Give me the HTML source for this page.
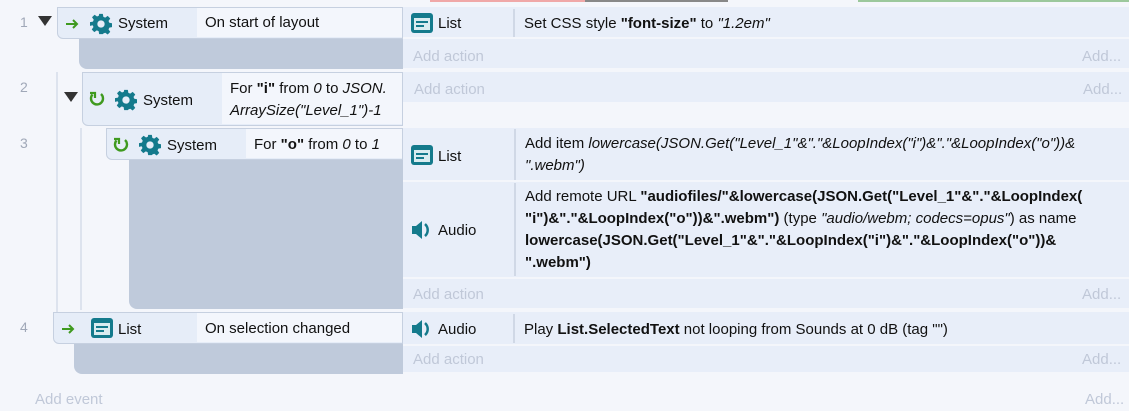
<!DOCTYPE html>
<html><head><meta charset="utf-8"><style>
body{margin:0;width:1129px;height:403px;overflow:hidden;background:#f4f6fb;font-family:"Segoe UI","Liberation Sans",sans-serif;font-size:15px;color:#111;position:relative}
.a{position:absolute;box-sizing:border-box}
.num{color:#a0a8b8;font-size:14px}
.hdr{background:#e6edf8;border:1px solid #c6d0e0;border-radius:0 0 0 6px}
.ctext{background:#f3f6fc;white-space:nowrap}
.gray{background:#bfcadb;border-radius:0 0 0 8px}
.act{background:#e8eef9;border-bottom:2px solid #f4f6fb}
.addl{color:#c0c8d8}
.obj{border-right:2px solid #d0d8e6}
.t{white-space:nowrap;line-height:22px}
.guide{background:#dde3ee;width:2px}
i{font-style:italic}
svg{position:absolute}
</style></head><body>
<div class="a" style="left:430px;top:0;width:155px;height:2px;background:#f0a8a8"></div>
<div class="a" style="left:585px;top:0;width:143px;height:2px;background:#888"></div>
<div class="a" style="left:858px;top:0;width:271px;height:2px;background:#9cc89c"></div>

<div class="a guide" style="left:56px;top:72px;height:240px"></div>
<div class="a guide" style="left:80px;top:128px;height:182px"></div>

<div class="a num" style="left:20px;top:14px">1</div>
<div class="a num" style="left:20px;top:79px">2</div>
<div class="a num" style="left:20px;top:135px">3</div>
<div class="a num" style="left:20px;top:319px">4</div>

<svg style="left:38px;top:16px" width="14" height="10"><path d="M0 0H14L7 10Z" fill="#333"/></svg>
<svg style="left:64px;top:92px" width="14" height="10"><path d="M0 0H14L7 10Z" fill="#333"/></svg>

<!-- Event 1 -->
<div class="a gray" style="left:79px;top:38px;width:324px;height:31px"></div>
<div class="a hdr" style="left:57px;top:7px;width:346px;height:32px"></div>
<div class="a ctext" style="left:197px;top:8px;width:205px;height:29px;padding:4px 0 0 8px;line-height:22px">On start of layout</div>
<svg style="left:66px;top:18px" width="14" height="12"><path d="M0 6H11M7 2L11 6L7 10" stroke="#3f9a1f" stroke-width="2" fill="none"/></svg>
<svg style="left:90px;top:13px" width="22" height="22" viewBox="0 0 24 24"><path fill="#147a8c" d="M10 1h4l.6 3.2 2 .9 2.7-1.9 2.8 2.8-1.9 2.7.9 2 3.2.6v4l-3.2.6-.9 2 1.9 2.7-2.8 2.8-2.7-1.9-2 .9L14 23h-4l-.6-3.2-2-.9-2.7 1.9-2.8-2.8 1.9-2.7-.9-2L0 14v-4l3.2-.6.9-2L2.2 4.7 5 1.9l2.7 1.9 2-.9zM12 8a4 4 0 100 8 4 4 0 000-8z"/></svg>
<div class="a t" style="left:118px;top:13px">System</div>

<!-- Event 2 -->
<div class="a hdr" style="left:82px;top:72px;width:321px;height:54px"></div>
<div class="a ctext" style="left:222px;top:73px;width:180px;height:51px;padding:5px 0 0 8px;line-height:22px">For <b>"i"</b> from <i>0</i> to <i>JSON.</i><br><i>ArraySize("Level_1")-1</i></div>
<svg style="left:88px;top:90px" width="18" height="18" viewBox="0 0 18 18"><path d="M4.5 4.5A6 6 0 1 0 13 4" stroke="#3f9a1f" stroke-width="2.4" fill="none"/><path d="M2 3h5v5" stroke="#3f9a1f" stroke-width="2.2" fill="none"/></svg>
<svg style="left:115px;top:89px" width="22" height="22" viewBox="0 0 24 24"><path fill="#147a8c" d="M10 1h4l.6 3.2 2 .9 2.7-1.9 2.8 2.8-1.9 2.7.9 2 3.2.6v4l-3.2.6-.9 2 1.9 2.7-2.8 2.8-2.7-1.9-2 .9L14 23h-4l-.6-3.2-2-.9-2.7 1.9-2.8-2.8 1.9-2.7-.9-2L0 14v-4l3.2-.6.9-2L2.2 4.7 5 1.9l2.7 1.9 2-.9zM12 8a4 4 0 100 8 4 4 0 000-8z"/></svg>
<div class="a t" style="left:143px;top:90px">System</div>

<!-- Event 3 -->
<div class="a gray" style="left:129px;top:159px;width:274px;height:150px"></div>
<div class="a hdr" style="left:106px;top:128px;width:297px;height:32px"></div>
<div class="a ctext" style="left:246px;top:129px;width:156px;height:29px;padding:5px 0 0 8px;line-height:22px">For <b>"o"</b> from <i>0</i> to <i>1</i></div>
<svg style="left:112px;top:136px" width="18" height="18" viewBox="0 0 18 18"><path d="M4.5 4.5A6 6 0 1 0 13 4" stroke="#3f9a1f" stroke-width="2.4" fill="none"/><path d="M2 3h5v5" stroke="#3f9a1f" stroke-width="2.2" fill="none"/></svg>
<svg style="left:139px;top:134px" width="22" height="22" viewBox="0 0 24 24"><path fill="#147a8c" d="M10 1h4l.6 3.2 2 .9 2.7-1.9 2.8 2.8-1.9 2.7.9 2 3.2.6v4l-3.2.6-.9 2 1.9 2.7-2.8 2.8-2.7-1.9-2 .9L14 23h-4l-.6-3.2-2-.9-2.7 1.9-2.8-2.8 1.9-2.7-.9-2L0 14v-4l3.2-.6.9-2L2.2 4.7 5 1.9l2.7 1.9 2-.9zM12 8a4 4 0 100 8 4 4 0 000-8z"/></svg>
<div class="a t" style="left:167px;top:135px">System</div>

<!-- Event 4 -->
<div class="a gray" style="left:74px;top:342px;width:329px;height:32px"></div>
<div class="a hdr" style="left:53px;top:312px;width:350px;height:32px"></div>
<div class="a ctext" style="left:197px;top:313px;width:205px;height:29px;padding:5px 0 0 8px;line-height:22px">On selection changed</div>
<svg style="left:62px;top:323px" width="14" height="12"><path d="M0 6H11M7 2L11 6L7 10" stroke="#3f9a1f" stroke-width="2" fill="none"/></svg>

<!-- Actions -->
<div class="a act" style="left:403px;top:7px;width:726px;height:32px"></div>
<div class="a obj" style="left:403px;top:9px;width:112px;height:28px"></div>
<div class="a t" style="left:438px;top:13px">List</div>
<div class="a t" style="left:524px;top:13px">Set CSS style <b>"font-size"</b> to <i>"1.2em"</i></div>
<div class="a act" style="left:403px;top:39px;width:726px;height:31px"></div>
<div class="a t addl" style="left:413px;top:46px">Add action</div>
<div class="a t addl" style="left:1082px;top:46px">Add...</div>

<div class="a act" style="left:403px;top:72px;width:726px;height:32px"></div>
<div class="a t addl" style="left:414px;top:79px">Add action</div>
<div class="a t addl" style="left:1083px;top:79px">Add...</div>

<div class="a act" style="left:403px;top:128px;width:726px;height:54px"></div>
<div class="a obj" style="left:403px;top:129px;width:113px;height:51px"></div>
<div class="a t" style="left:438px;top:146px">List</div>
<div class="a t" style="left:525px;top:133px">Add item <i>lowercase(JSON.Get("Level_1"&amp;"."&amp;LoopIndex("i")&amp;"."&amp;LoopIndex("o"))&amp;</i><br><i>".webm")</i></div>

<div class="a act" style="left:403px;top:182px;width:726px;height:97px"></div>
<div class="a obj" style="left:403px;top:183px;width:113px;height:93px"></div>
<div class="a t" style="left:438px;top:220px">Audio</div>
<div class="a t" style="left:525px;top:186px;width:604px;overflow:hidden">Add remote URL <b>"audiofiles/"&amp;lowercase(JSON.Get("Level_1"&amp;"."&amp;LoopIndex(</b><br><b>"i")&amp;"."&amp;LoopIndex("o"))&amp;".webm")</b> (type <i>"audio/webm; codecs=opus"</i>) as name<br><b>lowercase(JSON.Get("Level_1"&amp;"."&amp;LoopIndex("i")&amp;"."&amp;LoopIndex("o"))&amp;</b><br><b>".webm")</b></div>
<div class="a act" style="left:403px;top:279px;width:726px;height:31px"></div>
<div class="a t addl" style="left:413px;top:284px">Add action</div>
<div class="a t addl" style="left:1082px;top:284px">Add...</div>

<div class="a act" style="left:403px;top:312px;width:726px;height:34px"></div>
<div class="a obj" style="left:403px;top:314px;width:112px;height:29px"></div>
<div class="a t" style="left:438px;top:319px">Audio</div>
<div class="a t" style="left:524px;top:319px">Play <b>List.SelectedText</b> not looping from Sounds at 0 dB (tag "")</div>
<div class="a act" style="left:403px;top:346px;width:726px;height:28px"></div>
<div class="a t addl" style="left:413px;top:349px">Add action</div>
<div class="a t addl" style="left:1082px;top:349px">Add...</div>

<div class="a t addl" style="left:35px;top:389px">Add event</div>
<div class="a t addl" style="left:1085px;top:389px">Add...</div>

<svg style="left:411px;top:13px" width="22" height="20" viewBox="0 0 22 20"><rect x="0" y="0" width="22" height="20" rx="3" fill="#147a8c"/><rect x="3" y="5" width="16" height="12" fill="#d9ecf0"/><rect x="5" y="8" width="12" height="2" fill="#147a8c"/><rect x="5" y="12" width="8" height="2" fill="#147a8c"/></svg>
<svg style="left:411px;top:145px" width="22" height="20" viewBox="0 0 22 20"><rect x="0" y="0" width="22" height="20" rx="3" fill="#147a8c"/><rect x="3" y="5" width="16" height="12" fill="#d9ecf0"/><rect x="5" y="8" width="12" height="2" fill="#147a8c"/><rect x="5" y="12" width="8" height="2" fill="#147a8c"/></svg>
<svg style="left:91px;top:318px" width="22" height="20" viewBox="0 0 22 20"><rect x="0" y="0" width="22" height="20" rx="3" fill="#147a8c"/><rect x="3" y="5" width="16" height="12" fill="#d9ecf0"/><rect x="5" y="8" width="12" height="2" fill="#147a8c"/><rect x="5" y="12" width="8" height="2" fill="#147a8c"/></svg>
<div class="a t" style="left:118px;top:319px">List</div>

<svg style="left:412px;top:219px" width="20" height="22" viewBox="0 0 20 22"><path d="M0 7h4l6-5v18l-6-5H0z" fill="#147a8c"/><path d="M13 5a8 8 0 0 1 0 12" stroke="#147a8c" stroke-width="2.5" fill="none"/></svg>
<svg style="left:412px;top:318px" width="20" height="22" viewBox="0 0 20 22"><path d="M0 7h4l6-5v18l-6-5H0z" fill="#147a8c"/><path d="M13 5a8 8 0 0 1 0 12" stroke="#147a8c" stroke-width="2.5" fill="none"/></svg>
</body></html>
